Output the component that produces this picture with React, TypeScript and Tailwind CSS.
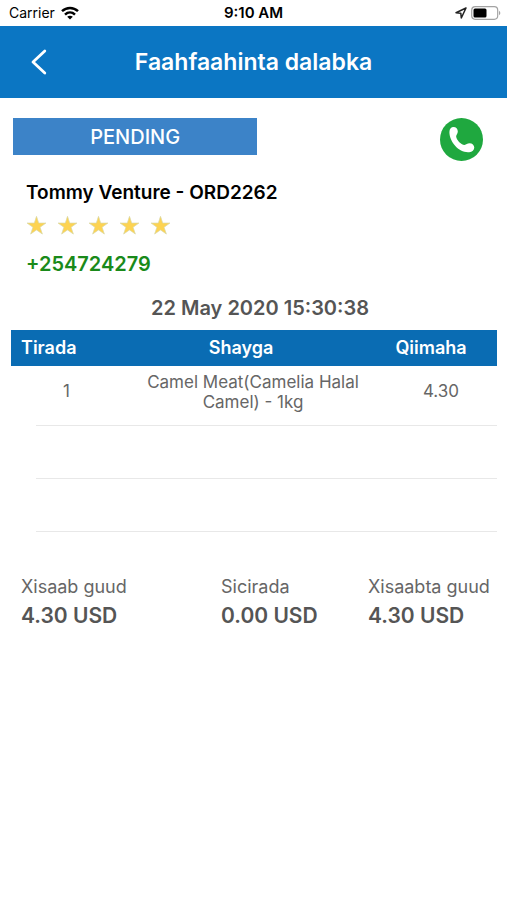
import { clsx } from "clsx";

interface OrderItem {
  quantity: number;
  name: string;
  price: string;
}

interface Total {
  label: string;
  amount: string;
}

const ORDER_ITEMS: OrderItem[] = [
  { quantity: 1, name: "Camel Meat(Camelia Halal Camel) - 1kg", price: "4.30" },
];

const EMPTY_ROWS = 2;

const TOTALS: Total[] = [
  { label: "Xisaab guud", amount: "4.30 USD" },
  { label: "Sicirada", amount: "0.00 USD" },
  { label: "Xisaabta guud", amount: "4.30 USD" },
];

function WifiIcon() {
  return (
    <svg viewBox="0 0 18 14" className="h-[14px] w-[18px]" aria-hidden="true">
      <g fill="none" stroke="#000" strokeWidth="2.5">
        <path d="M1 5.2C5.6.9 12.4.9 17 5.2" />
        <path d="M4 8.6C6.9 5.9 11.1 5.9 14 8.6" />
      </g>
      <path d="M9 13.6 6.2 10.8C7.8 9.4 10.2 9.4 11.8 10.8Z" />
    </svg>
  );
}

function StatusBar() {
  return (
    <div className="grid h-[26px] grid-cols-3 items-center px-[9px] text-black">
      <div className="flex items-center gap-1.5 text-sm">
        Carrier
        <WifiIcon />
      </div>
      <div className="text-center text-[15px] font-semibold">9:10 AM</div>
      <div className="flex items-center justify-end gap-1">
        <svg viewBox="0 0 12 12" className="size-3" aria-hidden="true">
          <path
            d="M11 1 1 5.7 5.8 6.2 6.3 11Z"
            fill="none"
            stroke="#222"
            strokeWidth="1.5"
            strokeLinejoin="round"
          />
        </svg>
        <svg viewBox="0 0 30 14" className="-mr-[3px] h-[14px] w-[30px]" aria-hidden="true">
          <rect x="0.7" y="0.7" width="26" height="12.6" rx="3.5" fill="none" stroke="#a3a3a3" strokeWidth="1.2" />
          <rect x="2.5" y="2.5" width="13" height="9" rx="1.5" />
          <path d="M28 4.8c1.8.8 1.8 3.6 0 4.4z" fill="#a3a3a3" />
        </svg>
      </div>
    </div>
  );
}

function Header() {
  return (
    <header className="grid h-[72px] grid-cols-[60px_1fr_60px] items-center bg-[#0b76c3] text-white">
      <button type="button" aria-label="Back" className="flex h-full items-center pl-[30px]">
        <svg viewBox="0 0 17 26" className="h-[26px] w-[17px]" aria-hidden="true">
          <path
            d="M14.8 2 3 13 14.8 24"
            fill="none"
            stroke="currentColor"
            strokeWidth="2.8"
            strokeLinecap="round"
            strokeLinejoin="round"
          />
        </svg>
      </button>
      <h1 className="text-center text-[23px] font-semibold">Faahfaahinta dalabka</h1>
    </header>
  );
}

function CallIcon() {
  return (
    <svg viewBox="0 0 128 128" className="size-full" aria-hidden="true">
      <circle cx="64" cy="64" r="64" fill="#1fa83f" />
      <path
        d="M28 42C28 32 34 27 40 27C48 27 53 33 53 40C53 46 49 49 48 54C49 65 62 79 73 80C78 79 81 75 88 75C96 75 102 81 102 88C102 96 96 101 87 102C58 105 28 73 28 42Z"
        fill="#fff"
      />
    </svg>
  );
}

function Rating({ value }: { value: number }) {
  return (
    <div className="flex gap-2.5 pb-1.5" role="img" aria-label={`${value} / 5`}>
      {[1, 2, 3, 4, 5].map((star) => (
        <svg key={star} viewBox="0 0 24 24" className="size-[21px]" aria-hidden="true">
          <path
            d="M12 1.5 14.5 9.2H22.8L16.1 14 18.7 21.8 12 17 5.3 21.8 7.9 14 1.2 9.2H9.5Z"
            className={clsx(star <= value ? "fill-[#fdd352]" : "fill-gray-200")}
            stroke="#d8d9a8"
            strokeWidth="0.8"
          />
        </svg>
      ))}
    </div>
  );
}

function ItemsTable() {
  return (
    <table className="w-full table-fixed border-separate border-spacing-0 text-[17px] text-[#666]">
      <colgroup>
        <col className="w-[25px]" />
        <col className="w-[85px]" />
        <col />
        <col className="w-[112px]" />
      </colgroup>
      <thead className="bg-[#0a6cb3] text-lg text-white">
        <tr className="h-9">
          <th colSpan={2} className="pl-2.5 text-left font-semibold">
            Tirada
          </th>
          <th className="pr-6 font-semibold">Shayga</th>
          <th className="pr-5 font-semibold">Qiimaha</th>
        </tr>
      </thead>
      <tbody>
        {ORDER_ITEMS.map((item) => (
          <tr key={item.name} className="h-[60px]">
            <td />
            <td className="border-b border-[#e8e8e8] pr-6 pb-2 text-center">{item.quantity}</td>
            <td className="border-b border-[#e8e8e8] px-6 pb-2 text-center leading-5">{item.name}</td>
            <td className="border-b border-[#e8e8e8] pb-2 text-center">{item.price}</td>
          </tr>
        ))}
        {Array.from({ length: EMPTY_ROWS }, (_, index) => (
          <tr key={index} className="h-[53px]">
            <td />
            <td colSpan={3} className="border-b border-[#e8e8e8]" />
          </tr>
        ))}
      </tbody>
    </table>
  );
}

export default function App() {
  return (
    <div className="min-h-screen bg-white font-['Inter',sans-serif]">
      <StatusBar />
      <Header />
      <main className="pt-5 pr-2.5 pl-[11px]">
        <div className="flex items-start justify-between pr-[14px] pl-[2px]">
          <div className="flex h-[37px] w-[52%] items-center justify-center bg-[#3c83c8] text-xl font-medium text-white">
            PENDING
          </div>
          <button type="button" aria-label="Call" className="size-[43px]">
            <CallIcon />
          </button>
        </div>

        <section className="flex flex-col items-start gap-2 px-[15px] pt-[18px]">
          <h2 className="text-[19px] leading-7 font-semibold text-black">Tommy Venture - ORD2262</h2>
          <Rating value={5} />
          <a href="tel:+254724279" className="text-xl leading-7 font-semibold text-[#1a8a1a]">
            +254724279
          </a>
        </section>

        <p className="pt-4 pb-2 pl-3 text-center text-xl font-semibold text-[#555]">22 May 2020 15:30:38</p>

        <ItemsTable />

        <dl className="grid grid-cols-[200fr_147fr_129fr] pt-10 pl-2.5 text-[#666]">
          {TOTALS.map((total) => (
            <div key={total.label}>
              <dt className="text-lg leading-[30px] whitespace-nowrap">{total.label}</dt>
              <dd className="text-[21px] leading-7 font-semibold whitespace-nowrap text-[#555]">{total.amount}</dd>
            </div>
          ))}
        </dl>
      </main>
    </div>
  );
}
